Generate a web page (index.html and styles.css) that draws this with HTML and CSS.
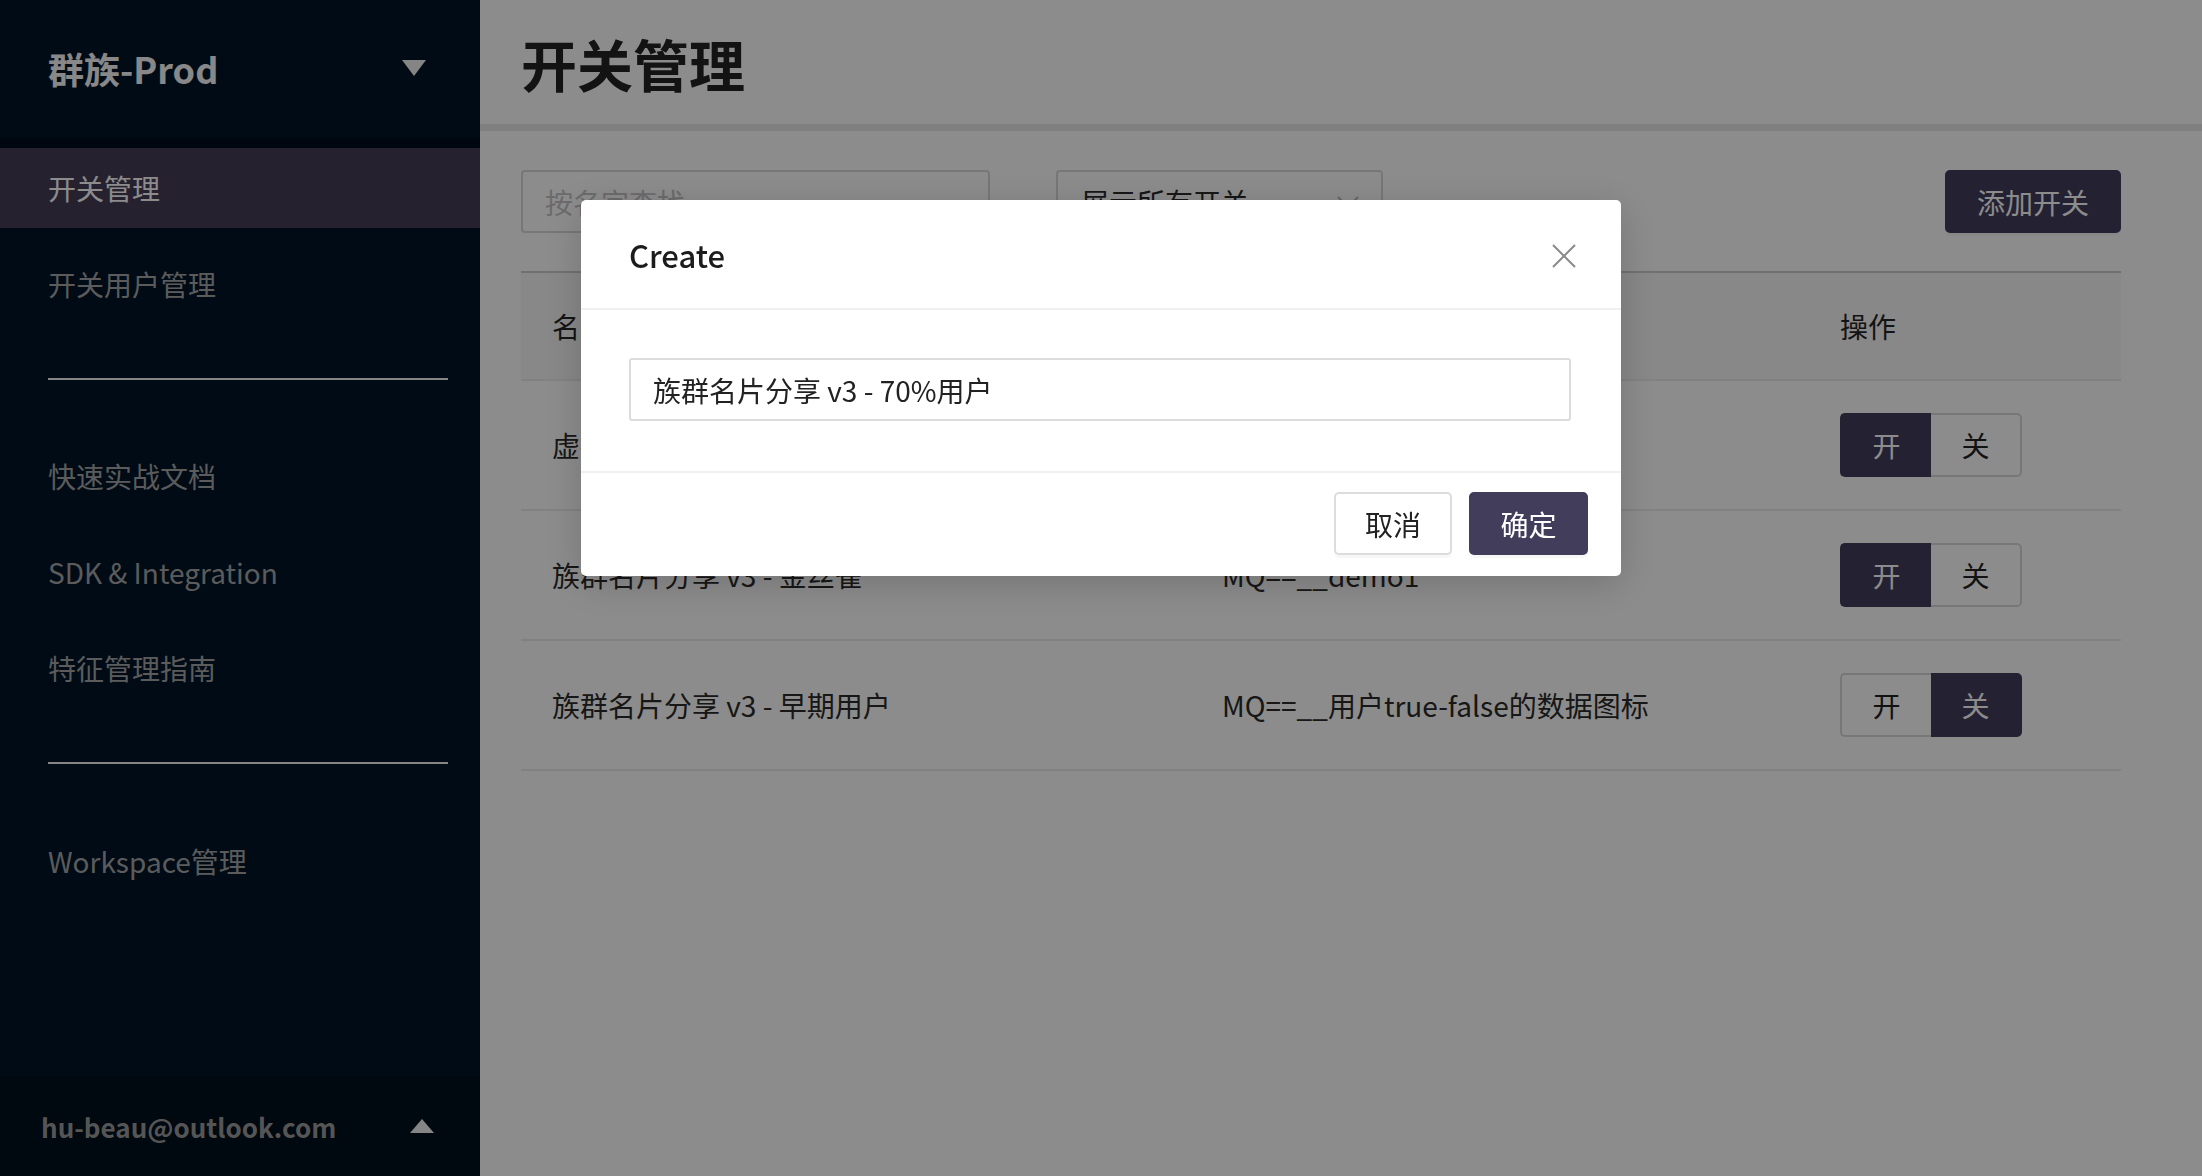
FILE: index.html
```html
<!DOCTYPE html>
<html lang="zh-CN">
<head>
<meta charset="utf-8">
<title>开关管理</title>
<link rel="stylesheet" href="styles.css">
</head>
<body>
<div class="app">
  <aside class="sider">
    <div class="sider-head">
      <span class="ws-name">群族-Prod</span>
      <svg class="tri" width="24" height="16" viewBox="0 0 24 16"><polygon points="0,0 24,0 12,16" /></svg>
    </div>
    <nav class="nav">
      <a class="nav-item active">开关管理</a>
      <a class="nav-item">开关用户管理</a>
      <div class="nav-sep"></div>
      <a class="nav-item">快速实战文档</a>
      <a class="nav-item">SDK &amp; Integration</a>
      <a class="nav-item">特征管理指南</a>
      <div class="nav-sep nav-sep-2"></div>
      <a class="nav-item">Workspace管理</a>
    </nav>
    <div class="sider-foot">
      <span class="email">hu-beau@outlook.com</span>
      <svg class="tri" width="24" height="14" viewBox="0 0 24 14"><polygon points="12,0 24,14 0,14" /></svg>
    </div>
  </aside>
  <main class="main">
    <header class="page-head"><h1>开关管理</h1></header>
    <section class="content">
      <div class="toolbar">
        <input class="search" type="text" placeholder="按名字查找">
        <div class="select">
          <span>展示所有开关</span>
          <svg width="22" height="12" viewBox="0 0 22 12"><polyline points="1,1 11,11 21,1" fill="none" stroke="#bbb" stroke-width="2"/></svg>
        </div>
        <button class="btn btn-primary add">添加开关</button>
      </div>
      <table class="table">
        <colgroup><col class="c1"><col class="c2"><col class="c3"></colgroup>
        <thead>
          <tr><th>名称</th><th>描述</th><th>操作</th></tr>
        </thead>
        <tbody>
          <tr>
            <td>虚拟名片分享 v3 - 全量用户</td>
            <td>MQ==__demo2</td>
            <td><div class="toggle"><button class="on">开</button><button>关</button></div></td>
          </tr>
          <tr>
            <td>族群名片分享 v3 - 金丝雀</td>
            <td>MQ==__demo1</td>
            <td><div class="toggle"><button class="on">开</button><button>关</button></div></td>
          </tr>
          <tr>
            <td>族群名片分享 v3 - 早期用户</td>
            <td>MQ==__用户true-false的数据图标</td>
            <td><div class="toggle"><button>开</button><button class="on">关</button></div></td>
          </tr>
        </tbody>
      </table>
    </section>
  </main>
</div>
<div class="mask"></div>
<div class="modal-wrap">
  <div class="modal">
    <div class="modal-head">
      <span class="modal-title">Create</span>
      <svg class="close" width="24" height="24" viewBox="0 0 24 24"><path d="M1 1 L23 23 M23 1 L1 23" stroke="#8a8a8a" stroke-width="2" fill="none"/></svg>
    </div>
    <div class="modal-body">
      <input class="field" type="text" value="族群名片分享 v3 - 70%用户">
    </div>
    <div class="modal-foot">
      <button class="btn btn-default">取消</button>
      <button class="btn btn-primary">确定</button>
    </div>
  </div>
</div>
</body>
</html>
```
FILE: styles.css
```css
* { box-sizing: border-box; }
html, body {
  margin: 0;
  height: 100%;
  overflow: hidden;
}
body {
  font-family: "Noto Sans CJK SC", "Noto Sans", sans-serif;
  font-size: 28px;
  color: #2a2a2a;
  background: #fff;
}
.app {
  display: flex;
  height: 1176px;
}

/* sidebar */
.sider {
  width: 480px;
  flex: none;
  background: #001529;
  display: flex;
  flex-direction: column;
}
.sider-head {
  height: 148px;
  border-bottom: 10px solid #000c1c;
  display: flex;
  align-items: center;
  justify-content: space-between;
  padding: 0 54px 2px 48px;
}
.ws-name {
  font-size: 36px;
  font-weight: 700;
  color: #f7f7f7;
}
.tri { fill: #f2f2f2; display: block; }
.sider-head .tri { margin-top: -1px; }
.nav { display: flex; flex-direction: column; }
.nav-item {
  display: block;
  height: 80px;
  line-height: 80px;
  margin-bottom: 16px;
  padding-left: 48px;
  color: #a7a7a7;
  font-size: 28px;
}
.nav-item.active {
  background: #453d57;
  color: #fff;
}
.nav-sep {
  height: 2px;
  background: #f2f2f2;
  margin: 38px 32px 56px 48px;
}
.nav-sep-2 { margin-top: 38px; margin-bottom: 57px; }
.sider-foot {
  margin-top: auto;
  height: 100px;
  background: #000f1e;
  display: flex;
  align-items: center;
  justify-content: space-between;
  padding: 0 46px 0 41px;
}
.email {
  font-size: 26px;
  font-weight: 600;
  color: #9c9c9c;
}

/* main */
.main {
  flex: 1;
  display: flex;
  flex-direction: column;
}
.page-head {
  height: 131px;
  border-bottom: 7px solid #e8e8e8;
  padding: 0 41px;
  display: flex;
  align-items: center;
}
.page-head h1 {
  margin: 0;
  font-size: 56px;
  font-weight: 700;
  color: #242424;
}
.content {
  padding: 39px 81px 0 41px;
}
.toolbar {
  display: flex;
  align-items: center;
  height: 63px;
}
.search {
  width: 469px;
  height: 63px;
  border: 2px solid #d9d9d9;
  border-radius: 4px;
  padding: 0 22px;
  font: inherit;
  font-size: 28px;
  color: #2a2a2a;
  background: #fff;
}
.search::placeholder { color: #c4c4c4; }
.select {
  margin-left: 66px;
  width: 327px;
  height: 63px;
  border: 2px solid #d9d9d9;
  border-radius: 4px;
  padding: 0 22px 0 23px;
  display: flex;
  align-items: center;
  justify-content: space-between;
  color: #2a2a2a;
}
.btn {
  font: inherit;
  font-size: 28px;
  height: 63px;
  border-radius: 5px;
  cursor: pointer;
}
.btn-primary {
  background: #433d5c;
  color: #fff;
  border: 2px solid #433d5c;
  box-shadow: 0 3px 0 rgba(0,0,0,0.03);
}
.btn-default {
  background: #fff;
  color: #222;
  border: 2px solid #dcdcdc;
  box-shadow: 0 3px 0 rgba(0,0,0,0.03);
}
.add {
  margin-left: auto;
  width: 176px;
}
.table {
  margin-top: 38px;
  width: 100%;
  border-collapse: collapse;
  table-layout: fixed;
}
.c1 { width: 670px; }
.c2 { width: 618px; }
.c3 { width: 312px; }
.table th {
  height: 108px;
  background: #f8f8f8;
  border-top: 2px solid #cdcdcd;
  border-bottom: 2px solid #ececec;
  text-align: left;
  font-weight: 400;
  padding: 0 31px;
  color: #262626;
}
.table td {
  height: 130px;
  border-bottom: 2px solid #ececec;
  padding: 0 31px;
  color: #2a2a2a;
  white-space: nowrap;
}
.toggle {
  display: flex;
  width: 182px;
  height: 64px;
}
.toggle button {
  flex: 1;
  font: inherit;
  font-size: 28px;
  background: #fff;
  color: #222;
  border: 2px solid #d9d9d9;
  padding: 0;
}
.toggle button:first-child { border-radius: 5px 0 0 5px; border-right: none; }
.toggle button:last-child { border-radius: 0 5px 5px 0; border-left: none; }
.toggle button.on {
  background: #433d5c;
  border-color: #433d5c;
  color: #fff;
}

/* modal */
.mask {
  position: fixed;
  inset: 0;
  background: rgba(0,0,0,0.45);
}
.modal-wrap {
  position: fixed;
  inset: 0;
  padding-top: 200px;
}
.modal {
  width: 1040px;
  margin: 0 auto;
  background: #fff;
  border-radius: 5px;
  box-shadow: 0 8px 40px rgba(0,0,0,0.18);
}
.modal-head {
  height: 110px;
  border-bottom: 2px solid #f0f0f0;
  display: flex;
  align-items: center;
  justify-content: space-between;
  padding: 0 45px 0 48px;
}
.modal-title {
  font-size: 31px;
  font-weight: 500;
  color: #1c1c1c;
}
.close { display: block; margin-top: 4px; }
.modal-body {
  padding: 48px 50px 50px 48px;
}
.field {
  display: block;
  width: 100%;
  height: 63px;
  border: 2px solid #dcdcdc;
  border-radius: 3px;
  padding: 0 22px;
  font: inherit;
  font-size: 28px;
  color: #222;
}
.modal-foot {
  border-top: 2px solid #f0f0f0;
  padding: 19px 33px 21px;
  display: flex;
  justify-content: flex-end;
  gap: 17px;
}
.modal-foot .btn { width: 118px; padding: 0; }
.modal-foot .btn-primary { width: 119px; }
```
